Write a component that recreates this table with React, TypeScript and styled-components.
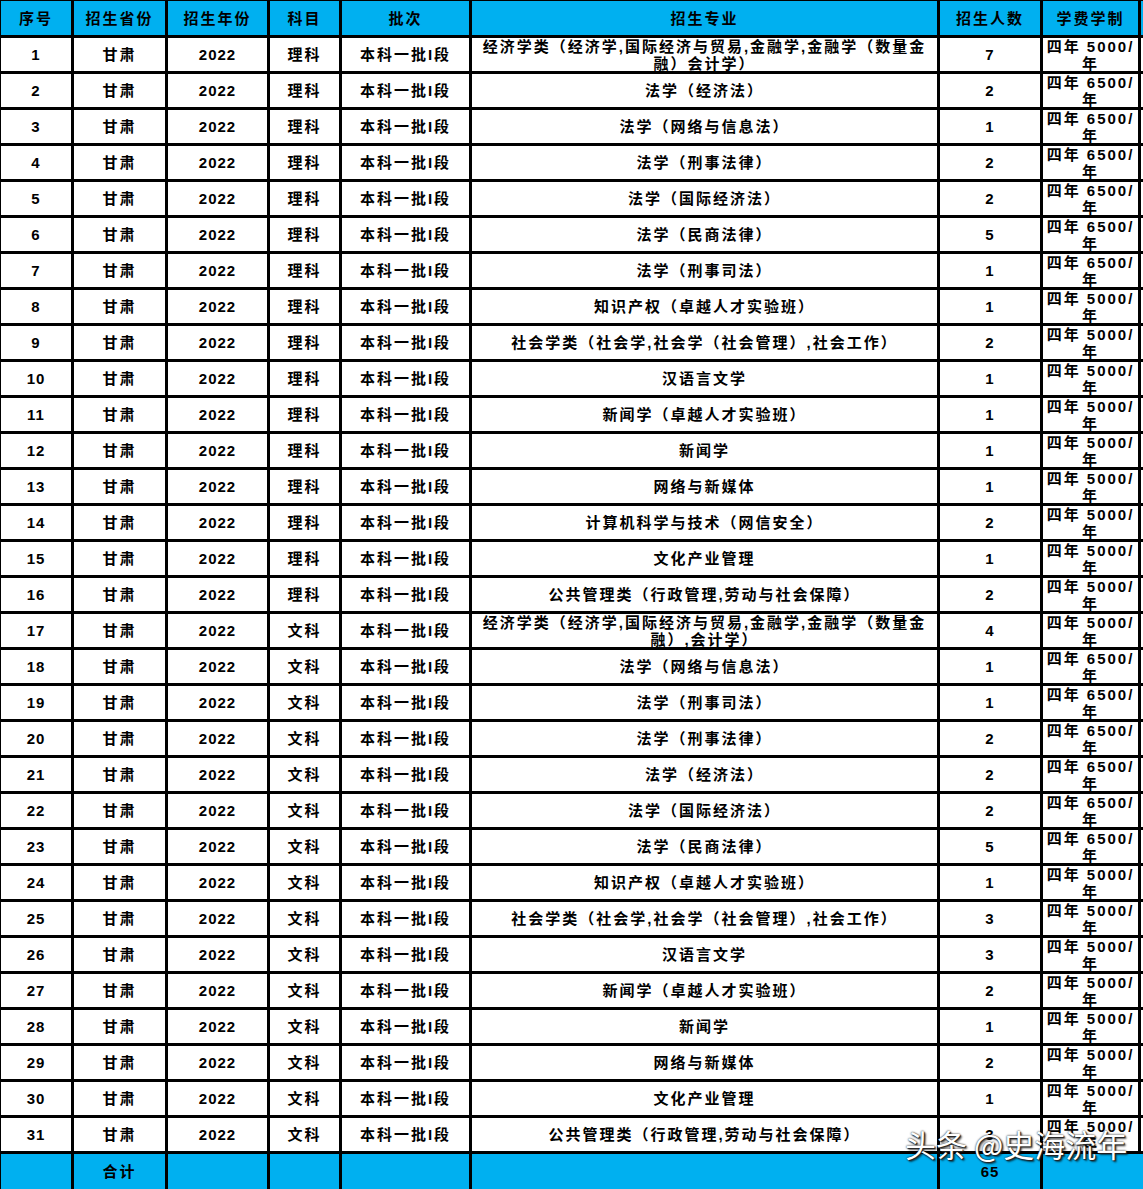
import styled, { createGlobalStyle } from "styled-components";

const GlobalStyle = createGlobalStyle`
    html, body {
        margin: 0;
        padding: 0;
        background: #ffffff;
    }
    body {
        font-family: "Liberation Sans", "Noto Sans CJK SC", sans-serif;
        color: #000;
    }
`

const BLUE = "#00b0f0";

const Page = styled.div`
    position: relative;
    width: 1143px;
    height: 1189px;
    overflow: hidden;
`

const Sheet = styled.div`
    display: grid;
    grid-template-columns: 70px 91px 99px 69px 127px 465px 100px 95px 2px;
    grid-template-rows: 34px repeat(31, 33px) 35px;
    gap: 3px;
    padding: 1px 0 0 1px;
    background: #000;
    width: 1143px;
    height: 1189px;
    box-sizing: border-box;
`

type Tone = "head" | "body" | "foot";

const Cell = styled.div<{ $tone: Tone; $num?: boolean; $span?: number }>`
    background: ${(p) => (p.$tone === "body" ? "#ffffff" : BLUE)};
    grid-column: ${(p) => (p.$span ? `span ${p.$span}` : "auto")};
    display: flex;
    align-items: center;
    align-items: safe center;
    justify-content: center;
    text-align: center;
    overflow: hidden;
    padding: 0 2px;
    box-sizing: border-box;
    font-weight: 700;
    font-size: 15px;
    line-height: 17px;
    letter-spacing: ${(p) => (p.$num ? "1px" : "2px")};
`

const Edge = styled.div<{ $tone: Tone }>`
    background: ${(p) => (p.$tone === "body" ? "#ffffff" : BLUE)};
`

/*watermark sits over the bottom right of the sheet*/
const Watermark = styled.div`
    position: absolute;
    left: 905px;
    top: 1128px;
    font-family: "Noto Sans CJK SC", sans-serif;
    font-size: 31px;
    line-height: 1;
    font-weight: 400;
    color: #ffffff;
    white-space: nowrap;
    text-shadow: 1px 1px 1px #222, 0 0 2px #000, 2px 2px 2px rgba(0, 0, 0, 0.6);
`

const headers = ["序号", "招生省份", "招生年份", "科目", "批次", "招生专业", "招生人数", "学费学制"];

type Row = [string, number, number];

const majors: Row[] = [
    ["经济学类（经济学,国际经济与贸易,金融学,金融学（数量金融）会计学）", 7, 5000],
    ["法学（经济法）", 2, 6500],
    ["法学（网络与信息法）", 1, 6500],
    ["法学（刑事法律）", 2, 6500],
    ["法学（国际经济法）", 2, 6500],
    ["法学（民商法律）", 5, 6500],
    ["法学（刑事司法）", 1, 6500],
    ["知识产权（卓越人才实验班）", 1, 5000],
    ["社会学类（社会学,社会学（社会管理）,社会工作）", 2, 5000],
    ["汉语言文学", 1, 5000],
    ["新闻学（卓越人才实验班）", 1, 5000],
    ["新闻学", 1, 5000],
    ["网络与新媒体", 1, 5000],
    ["计算机科学与技术（网信安全）", 2, 5000],
    ["文化产业管理", 1, 5000],
    ["公共管理类（行政管理,劳动与社会保障）", 2, 5000],
    ["经济学类（经济学,国际经济与贸易,金融学,金融学（数量金融）,会计学）", 4, 5000],
    ["法学（网络与信息法）", 1, 6500],
    ["法学（刑事司法）", 1, 6500],
    ["法学（刑事法律）", 2, 6500],
    ["法学（经济法）", 2, 6500],
    ["法学（国际经济法）", 2, 6500],
    ["法学（民商法律）", 5, 6500],
    ["知识产权（卓越人才实验班）", 1, 5000],
    ["社会学类（社会学,社会学（社会管理）,社会工作）", 3, 5000],
    ["汉语言文学", 3, 5000],
    ["新闻学（卓越人才实验班）", 2, 5000],
    ["新闻学", 1, 5000],
    ["网络与新媒体", 2, 5000],
    ["文化产业管理", 1, 5000],
    ["公共管理类（行政管理,劳动与社会保障）", 3, 5000],
];

export default function App() {
    const total = majors.reduce((sum, r) => sum + r[1], 0);

    return (
        <Page>
            <GlobalStyle/>
            <Sheet>
                {headers.map((h) => (
                    <Cell key={h} $tone="head">{h}</Cell>
                ))}
                <Edge $tone="head"/>

                {majors.map(([name, count, fee], i) => (
                    <Row key={i} index={i} name={name} count={count} fee={fee}/>
                ))}

                <Cell $tone="foot"/>
                <Cell $tone="foot">合计</Cell>
                <Cell $tone="foot"/>
                <Cell $tone="foot"/>
                <Cell $tone="foot"/>
                <Cell $tone="foot"/>
                <Cell $tone="foot" $num>{total}</Cell>
                <Cell $tone="foot" $span={2}/>
            </Sheet>
            <Watermark>头条 @史海流年</Watermark>
        </Page>
    );
}

function Row({index, name, count, fee}: {index: number; name: string; count: number; fee: number}) {
    return (
        <>
            <Cell $tone="body" $num>{index + 1}</Cell>
            <Cell $tone="body">甘肃</Cell>
            <Cell $tone="body" $num>2022</Cell>
            <Cell $tone="body">{index < 16 ? "理科" : "文科"}</Cell>
            <Cell $tone="body">本科一批I段</Cell>
            <Cell $tone="body">{name}</Cell>
            <Cell $tone="body" $num>{count}</Cell>
            <Cell $tone="body"><span>四年 {fee}/年</span></Cell>
            <Edge $tone="body"/>
        </>
    );
}
